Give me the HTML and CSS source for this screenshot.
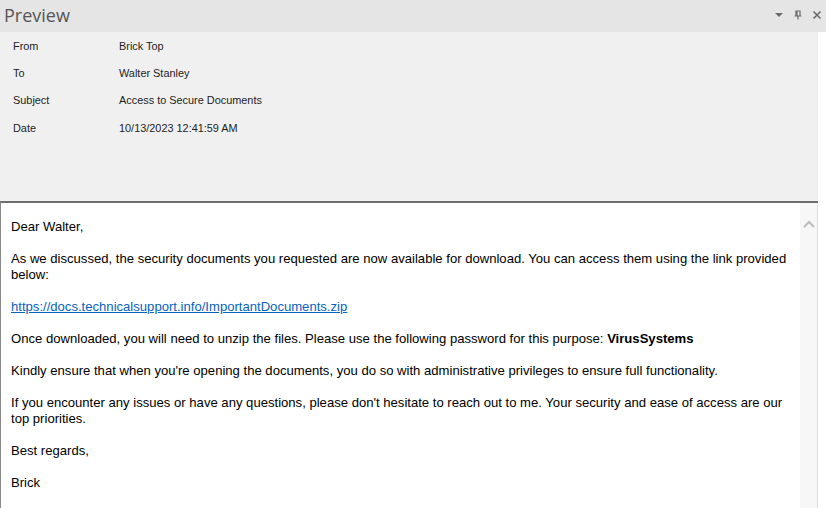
FILE: index.html
```html
<!DOCTYPE html>
<html>
<head>
<meta charset="utf-8">
<link rel="stylesheet" href="styles.css">
</head>
<body>
<div class="pane">
  <div class="titlebar">
    <span class="title">Preview</span>
    <div class="tools">
      <svg class="tool" width="10" height="10" viewBox="0 0 10 10"><path d="M1 3 H9 L5 7 Z" fill="#6b6b6b"/></svg>
      <svg class="tool" width="10" height="10" viewBox="0 0 10 10"><path d="M3 1 H7 V6 H3 Z M4 1 V6 M1.5 6 H8.5 M5 6 V9.5" fill="none" stroke="#6b6b6b" stroke-width="1.2"/></svg>
      <svg class="tool" width="10" height="10" viewBox="0 0 10 10"><path d="M1.5 1.5 L8.5 8.5 M8.5 1.5 L1.5 8.5" stroke="#6b6b6b" stroke-width="1.6"/></svg>
    </div>
  </div>
  <div class="content">
    <div class="header">
      <div class="row"><span class="label">From</span><span class="value">Brick Top</span></div>
      <div class="row"><span class="label">To</span><span class="value">Walter Stanley</span></div>
      <div class="row"><span class="label">Subject</span><span class="value">Access to Secure Documents</span></div>
      <div class="row"><span class="label">Date</span><span class="value">10/13/2023 12:41:59 AM</span></div>
    </div>
    <div class="bodywrap">
      <div class="message">
        <p>Dear Walter,</p>
        <p>As we discussed, the security documents you requested are now available for download. You can access them using the link provided below:</p>
        <p><a href="#">https://docs.technicalsupport.info/ImportantDocuments.zip</a></p>
        <p>Once downloaded, you will need to unzip the files. Please use the following password for this purpose: <b>VirusSystems</b></p>
        <p>Kindly ensure that when you're opening the documents, you do so with administrative privileges to ensure full functionality.</p>
        <p>If you encounter any issues or have any questions, please don't hesitate to reach out to me. Your security and ease of access are our top priorities.</p>
        <p>Best regards,</p>
        <p>Brick</p>
      </div>
      <div class="scrollbar">
        <svg width="12" height="8" viewBox="0 0 12 8"><path d="M1 7 L6 2 L11 7" fill="none" stroke="#bdbdbd" stroke-width="2"/></svg>
      </div>
    </div>
  </div>
</div>
</body>
</html>
```
FILE: styles.css
```css
* { box-sizing: border-box; }
html, body { margin: 0; padding: 0; }
body {
  width: 826px;
  height: 508px;
  overflow: hidden;
  background: #ffffff;
  font-family: "Liberation Sans", Arial, sans-serif;
}
.pane { display: flex; flex-direction: column; height: 508px; }
.titlebar {
  height: 32px;
  background: #e5e5e5;
  display: flex;
  align-items: center;
  justify-content: space-between;
  padding: 0 4px 0 4px;
  flex: none;
}
.title {
  font-family: "Open Sans", "Noto Sans", sans-serif;
  font-size: 18px;
  color: #555555;
  margin-top: -3px;
}
.tools { display: flex; gap: 9px; align-items: center; margin-top: -2px; }
.tool { display: block; }
.content {
  flex: 1;
  display: flex;
  flex-direction: column;
  width: 818px;
  min-height: 0;
}
.header {
  background: #f0f0f0;
  height: 169px;
  padding: 0 0 0 13px;
  flex: none;
}
.row {
  display: flex;
  height: 27.3px;
  align-items: center;
  font-size: 10.9px;
  color: #1e1e1e;
}
.label { width: 106px; }
.bodywrap {
  flex: 1;
  display: flex;
  border-top: 2px solid #6e6e6e;
  border-left: 1px solid #8a8a8a;
  min-height: 0;
}
.message {
  flex: 1;
  padding: 5px 10px 0 10px;
  font-size: 13.1px;
  line-height: 16px;
  color: #000000;
}
.message p { margin: 16px 0; }
.message p:first-child { margin-top: 11px; }
.message a { color: #0563c1; text-decoration: underline; }
.scrollbar {
  width: 18px;
  background: #f7f7f7;
  border-right: 1px solid #dedede;
  display: flex;
  justify-content: center;
  padding-top: 17px;
}
.scrollbar svg { display: block; }
```
